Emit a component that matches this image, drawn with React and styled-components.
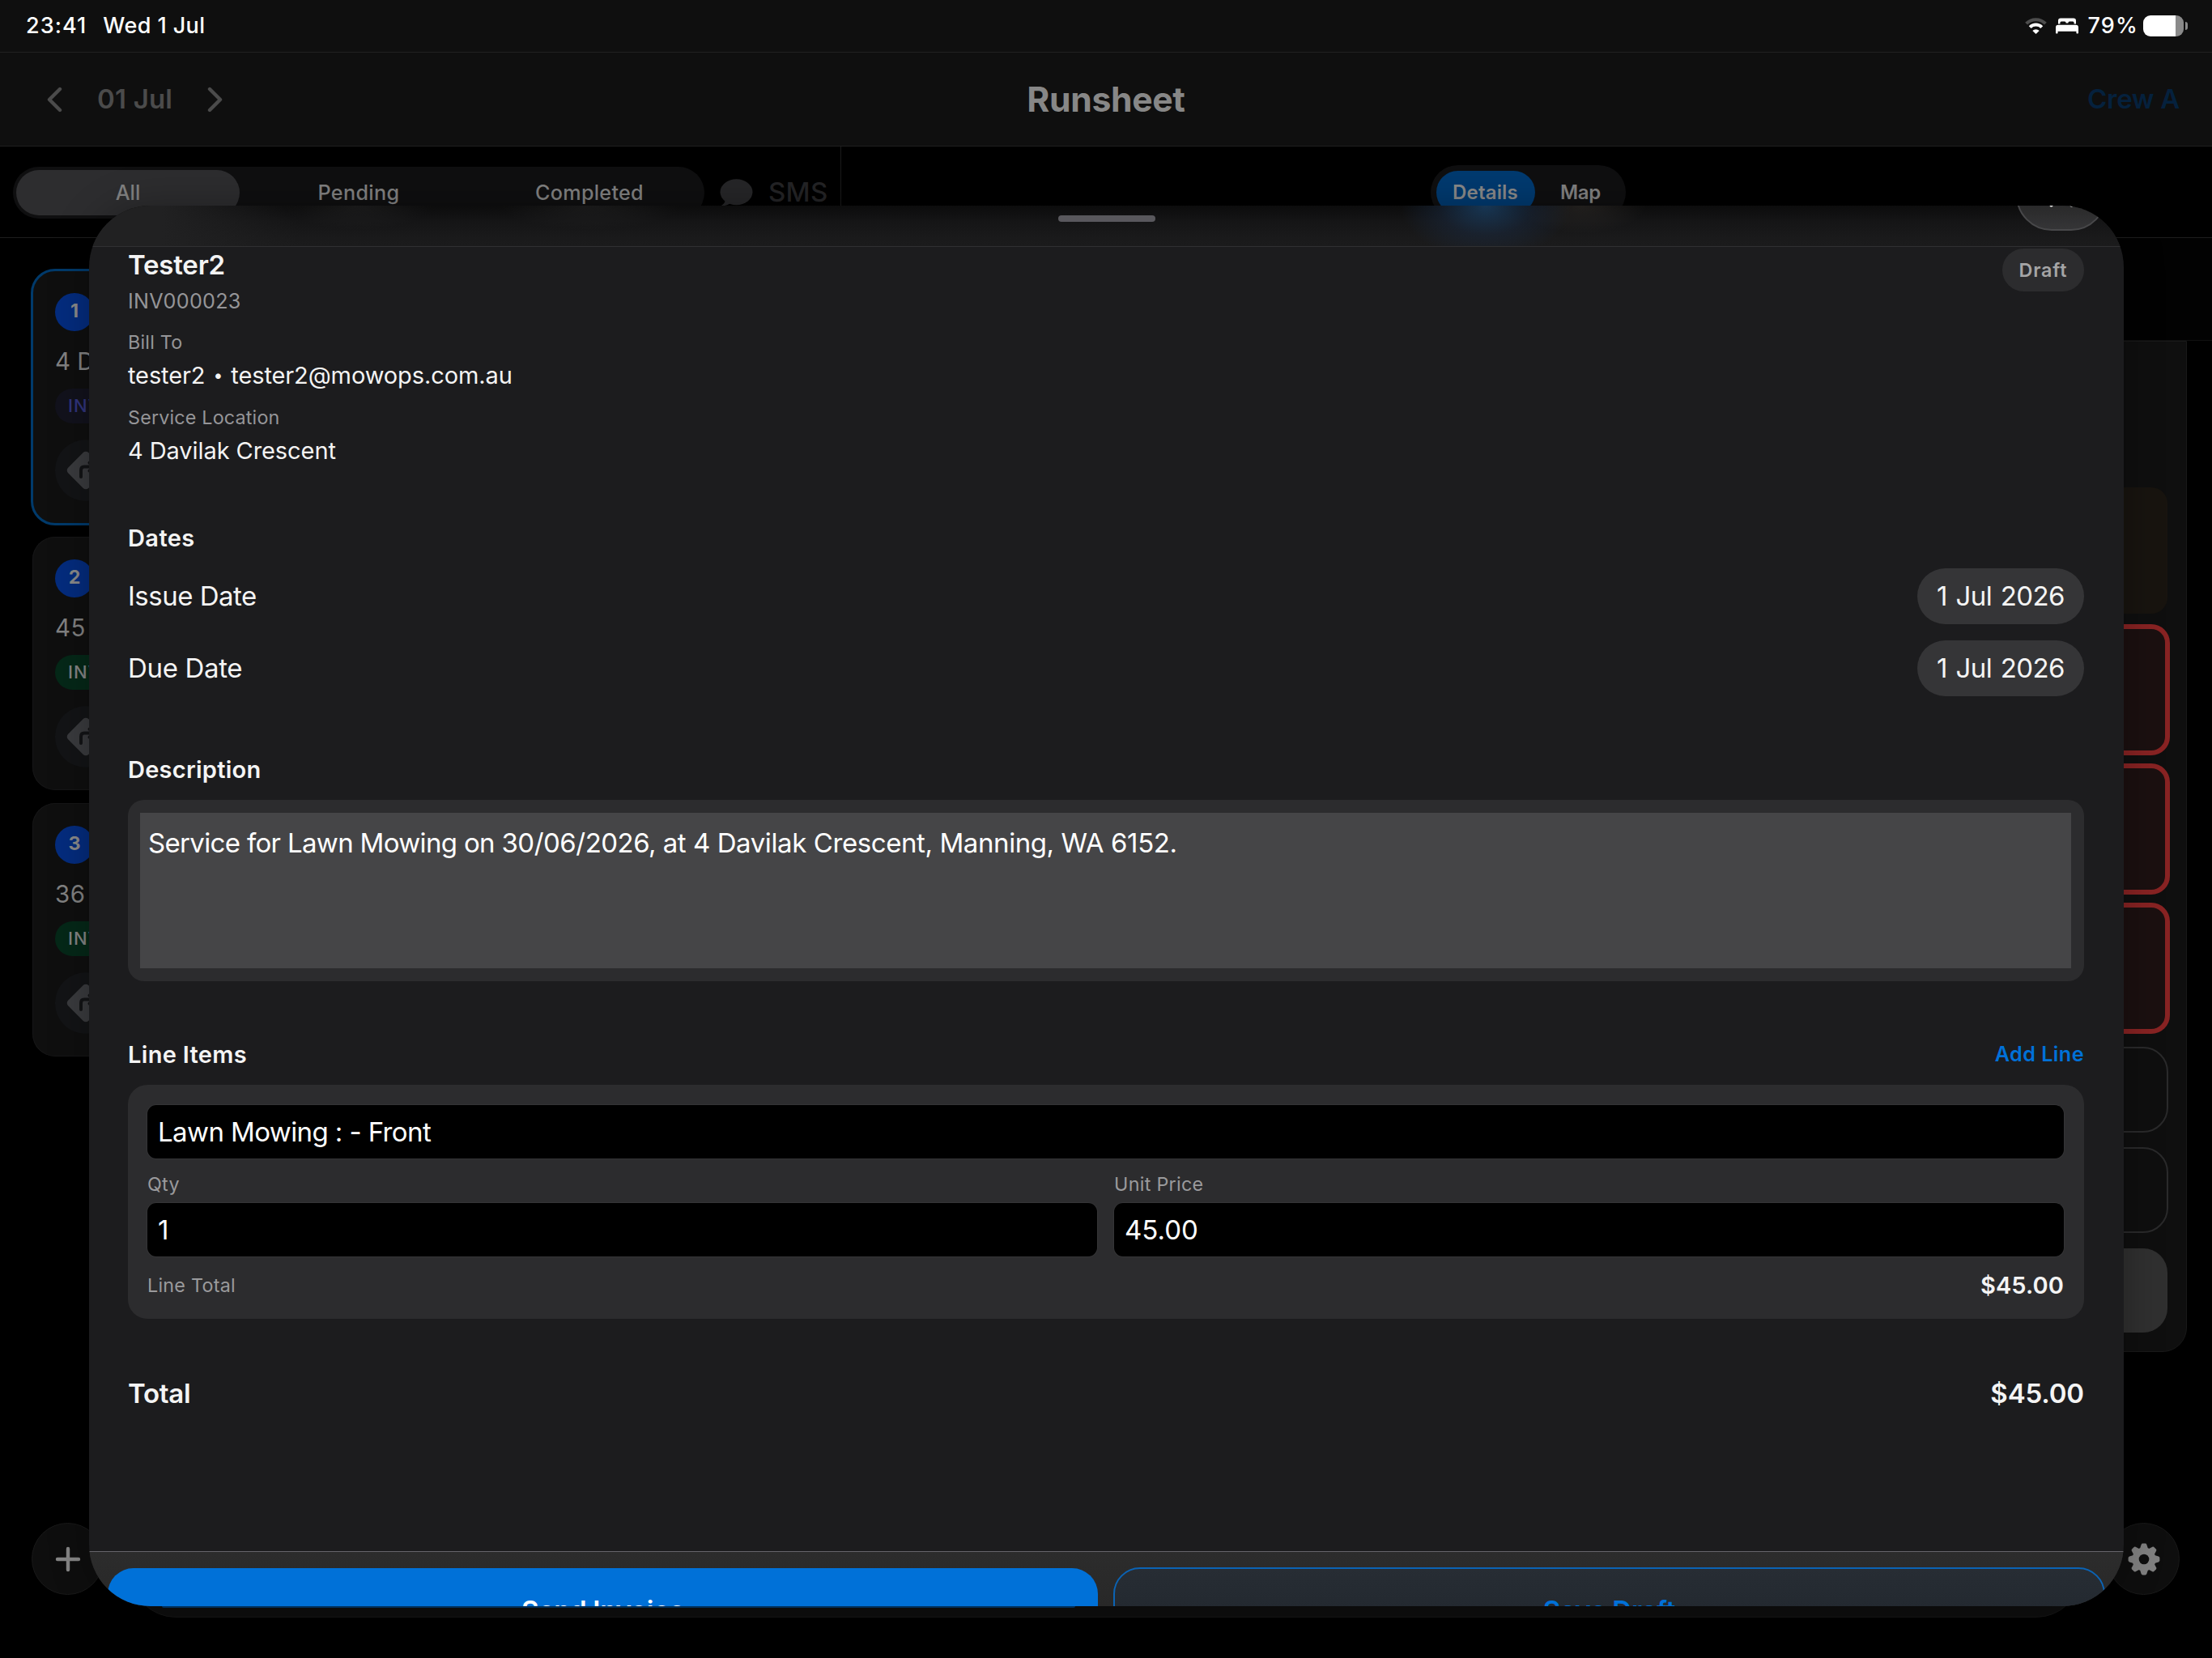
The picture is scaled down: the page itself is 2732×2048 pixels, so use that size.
import React from 'react';
import styled, { createGlobalStyle, css } from 'styled-components';

const GlobalStyle = createGlobalStyle`
  * { box-sizing: border-box; }
  html, body { margin: 0; padding: 0; background: #000; }
  body {
    font-family: Inter, "Liberation Sans", sans-serif;
    -webkit-font-smoothing: antialiased;
    overflow: hidden;
  }
`;

const Text = styled.span`
  display: block;
  white-space: pre;
  font-size: ${p => p.$size}px;
  font-weight: ${p => p.$weight || 400};
  line-height: ${p => p.$line || 36}px;
  letter-spacing: ${p => p.$track || 0}px;
  word-spacing: ${p => p.$word || 0}px;
  color: ${p => p.$color || '#f4f4f4'};
  ${p => p.$dy && css`transform: translateY(${p.$dy}px);`}
`;

const Run = styled.span`
  letter-spacing: ${p => p.$track}px;
`;

const Bullet = styled.span`
  font-size: 21px;
  line-height: 0;
  vertical-align: 3px;
  margin: 0 2px;
`;

const Screen = styled.div`
  position: relative;
  width: 2732px;
  height: 2048px;
  overflow: hidden;
  background: #000;
  display: flex;
  flex-direction: column;
`;

/* ---------- status bar ---------- */

const StatusBar = styled.div`
  height: 64px;
  flex: none;
  background: #0f0f0f;
  display: flex;
  align-items: center;
  justify-content: space-between;
  padding: 0 30px 0 32px;
`;

const StatusGroup = styled.div`
  display: flex;
  align-items: center;
  gap: ${p => p.$gap}px;
`;

const Battery = styled.div`
  display: flex;
  align-items: center;
  gap: 2px;
  margin-left: -5px;
`;

const BatteryBody = styled.div`
  width: 50px;
  height: 26px;
  border-radius: 9px;
  background: linear-gradient(90deg, #fff 40px, #8a8a8a 40px);
`;

const BatteryNub = styled.div`
  width: 3px;
  height: 10px;
  border-radius: 0 3px 3px 0;
  background: #8a8a8a;
`;

/* ---------- app header ---------- */

const Header = styled.header`
  height: 117px;
  flex: none;
  background: #0f0f0f;
  border-top: 1px solid #212121;
  border-bottom: 1px solid #1f1f1f;
  display: grid;
  grid-template-columns: 1fr auto 1fr;
  align-items: center;
  padding: 0 40px;
`;

const DateNav = styled.div`
  display: flex;
  align-items: center;
  gap: 43px;
  margin-left: 18px;
`;

const HeaderEnd = styled.div`
  justify-self: end;
`;

/* ---------- columns ---------- */

const Columns = styled.div`
  flex: 1;
  display: flex;
  min-height: 0;
  margin-bottom: 100px;
`;

const JobColumn = styled.div`
  width: 1039px;
  border-right: 1px solid #1b1b1b;
  display: flex;
  flex-direction: column;
`;

const DetailColumn = styled.div`
  flex: 1;
  display: flex;
  flex-direction: column;
`;

const Toolbar = styled.div`
  height: 113px;
  flex: none;
  border-bottom: 1px solid #1d1d1d;
  display: flex;
  align-items: center;
  justify-content: ${p => (p.$center ? 'center' : 'flex-start')};
  padding: ${p => (p.$center ? '0 0 0 3px' : '2px 16px 0')};
`;

const Segmented = styled.div`
  display: flex;
  align-items: center;
  gap: ${p => p.$gap}px;
  height: ${p => p.$height}px;
  padding: 0 ${p => p.$pad}px;
  border-radius: 34px;
  background: #0f0f10;
`;

const Segment = styled.div`
  width: ${p => p.$width}px;
  height: ${p => p.$height}px;
  border-radius: 28px;
  display: flex;
  align-items: center;
  justify-content: center;
  background: ${p => p.$fill || 'transparent'};
`;

const SmsButton = styled.div`
  display: flex;
  align-items: center;
  gap: 19px;
  margin-left: 19px;
`;

const JobList = styled.div`
  display: flex;
  flex-direction: column;
  gap: 16px;
  padding: 39.6px 32px 0 40px;
`;

const JobCard = styled.div`
  height: 313px;
  border-radius: 28px;
  padding: 28px;
  background: #0f0f0f;
  display: flex;
  flex-direction: column;
  align-items: flex-start;
  ${p =>
    p.$selected
      ? css`outline: 3px solid #003a6b; outline-offset: -1px;`
      : css`box-shadow: inset 0 0 0 1px #161617;`}
`;

const JobNumber = styled.div`
  width: 48px;
  height: 48px;
  border-radius: 50%;
  background: #042c7e;
  display: flex;
  align-items: center;
  justify-content: center;
`;

const JobAddress = styled.div`
  margin-top: 18px;
`;

const InvoiceTag = styled.div`
  margin-top: 17px;
  height: 43px;
  padding: 0 16px;
  border-radius: 22px;
  background: ${p => p.$fill};
  display: flex;
  align-items: center;
`;

const DirectionsButton = styled.div`
  margin-top: 20px;
  width: 76px;
  height: 76px;
  border-radius: 50%;
  background: #131416;
  display: flex;
  align-items: center;
  justify-content: center;
`;

const DetailSpacer = styled.div`
  height: 127px;
  flex: none;
  background: #020202;
  border-bottom: 1px solid #101010;
`;

const DetailPanel = styled.div`
  margin: 0 31px 0 30px;
  height: 1249px;
  border: 1px solid #191919;
  border-radius: 0 0 30px 30px;
  background: #0f0f0f;
  padding: 180px 23px 0;
  display: flex;
  flex-direction: column;
`;

const DetailBlock = styled.div`
  height: 156px;
  border-radius: 20px;
  margin-bottom: ${p => p.$after || 16}px;
  background: ${p => (p.$alert ? '#1b1010' : '#18140f')};
  ${p => p.$alert && css`outline: 6px solid #882323; outline-offset: -3px;`}
`;

const DetailAction = styled.div`
  height: 104px;
  border-radius: 30px;
  margin-bottom: 20px;
  background: ${p => (p.$solid ? '#303030' : 'transparent')};
  ${p => !p.$solid && css`outline: 2px solid #2a2a2b; outline-offset: -1px;`}
`;

/* ---------- floating controls over the columns ---------- */

const FloatingButton = styled.div`
  position: absolute;
  top: 1881px;
  ${p => p.$side}: ${p => p.$inset}px;
  width: 89px;
  height: 89px;
  border-radius: 50%;
  background: #0e0e0e;
  border: 1px solid #191919;
  display: flex;
  align-items: center;
  justify-content: center;
`;

const TabBar = styled.div`
  position: absolute;
  left: 161px;
  right: 161px;
  top: 1881px;
  height: 117px;
  border-radius: 56px;
  background: #0e0e0e;
  border: 1px solid #161616;
  padding: 102px 1242px 0 38px;
`;

const TabTint = styled.div`
  height: 2px;
  border-radius: 0 0 2px 2px;
  background: #00386a;
`;

/* ---------- invoice sheet ---------- */

const Sheet = styled.section`
  position: absolute;
  left: 110px;
  top: 254px;
  width: 2513px;
  height: 1730px;
  border-radius: 76px;
  overflow: hidden;
  background: #1c1c1e;
  box-shadow: 0 0 50px rgba(0, 0, 0, 0.3);
  display: flex;
  flex-direction: column;
`;

const SheetHeader = styled.div`
  height: 51px;
  flex: none;
  border-bottom: 1px solid #303032;
  display: flex;
  justify-content: center;
  padding-top: 12px;
  background:
    radial-gradient(ellipse 105px 66px at 1725px 0, rgba(26, 68, 108, 0.75), rgba(26, 46, 74, 0.4) 55%, transparent),
    radial-gradient(ellipse 80px 34px at 1843px 0, rgba(70, 64, 58, 0.35), transparent),
    radial-gradient(ellipse 90px 30px at 333px 0, rgba(60, 60, 60, 0.25), transparent),
    radial-gradient(ellipse 110px 30px at 619px 0, rgba(60, 60, 60, 0.25), transparent),
    linear-gradient(90deg, #212122 90px, rgba(33, 33, 34, 0) 260px),
    linear-gradient(180deg, #0c0c0c, #151516 40%, #1a1a1b 80%, #1b1b1c);
`;

const Grabber = styled.div`
  width: 120px;
  height: 8px;
  border-radius: 4px;
  background: #59585d;
`;

const CloseButton = styled.div`
  position: absolute;
  top: -57px;
  left: 2380px;
  width: 112px;
  height: 88px;
  border-radius: 44px;
  border: 2px solid #48484a;
  background: linear-gradient(180deg, #262626 55%, #353537);
  display: flex;
  align-items: center;
  justify-content: center;
`;

const SheetBody = styled.div`
  flex: 1;
  min-height: 0;
  padding: 2px 49px 0 48px;
  display: flex;
  flex-direction: column;
  gap: 72px;
`;

const Section = styled.div`
  display: flex;
  flex-direction: column;
  gap: 20px;
`;

const Client = styled.div`
  display: flex;
  justify-content: space-between;
  align-items: flex-start;
  margin-bottom: -1px;
`;

const ClientInfo = styled.div`
  display: flex;
  flex-direction: column;
`;

const Field = styled.div`
  display: flex;
  flex-direction: column;
  gap: ${p => p.$gap || 9}px;
  margin-top: ${p => p.$before || 0}px;
`;

const DraftBadge = styled.div`
  width: 101px;
  height: 53px;
  border-radius: 27px;
  background: #2c2c2e;
  display: flex;
  align-items: center;
  justify-content: center;
`;

const Row = styled.div`
  display: flex;
  align-items: center;
  justify-content: space-between;
  height: ${p => (p.$height ? `${p.$height}px` : 'auto')};
  margin-top: ${p => p.$before || 0}px;
`;

const DatePill = styled.div`
  width: 206px;
  height: 69px;
  border-radius: 35px;
  background: #353537;
  display: flex;
  align-items: center;
  justify-content: center;
`;

const DescriptionBox = styled.div`
  height: 224px;
  padding: 16px 16px 16px 15px;
  border-radius: 20px;
  background: #2c2c2e;
`;

const DescriptionField = styled.div`
  height: 192px;
  padding: 19px 10px;
  background: #454547;
`;

const LineCard = styled.div`
  height: 289px;
  padding: 25px 25px 24px 24px;
  border-radius: 24px;
  background: #2c2c2e;
`;

const Input = styled.div`
  height: 66px;
  padding-left: 13px;
  border-radius: 11px;
  background: #000;
  box-shadow: 0 0 0 1px #343436;
  display: flex;
  align-items: center;
`;

const InputGrid = styled.div`
  display: grid;
  grid-template-columns: 1fr 1fr;
  gap: 21px;
  margin-top: 18px;
`;

const SheetFooter = styled.div`
  height: 68px;
  flex: none;
  border-top: 1px solid #66656a;
  background: linear-gradient(180deg, #2c2c2c, #282828);
  padding: 20px 24px 0 23px;
  display: grid;
  grid-template-columns: 1fr 1fr;
  align-items: start;
  gap: 20px;
`;

const ActionButton = styled.div`
  height: 104px;
  border-radius: 32px;
  display: flex;
  align-items: center;
  justify-content: center;
  ${p =>
    p.$primary
      ? css`background: #0071d8;`
      : css`
          background: linear-gradient(180deg, #272d34, #232930 50%);
          outline: 2px solid #0b63b4;
          outline-offset: -1px;
        `}
`;

/* ---------- icons ---------- */

const Chevron = ({ flip }) => (
  <svg width="19" height="32" viewBox="0 0 19 32" fill="none" stroke="#4b4b4b" strokeWidth="4.4" strokeLinecap="round" strokeLinejoin="round">
    <path d={flip ? 'M3 3 L16 16 L3 29' : 'M16 3 L3 16 L16 29'} />
  </svg>
);

const WifiIcon = () => (
  <svg width="27" height="20" viewBox="0 0 27 20" fill="none" strokeLinecap="butt">
    <path d="M1.6 7.2 A16.6 16.6 0 0 1 25.4 7.2" stroke="#4d4d4d" strokeWidth="4" />
    <path d="M6.2 11.6 A10.3 10.3 0 0 1 20.8 11.6" stroke="#fff" strokeWidth="4" />
    <path d="M13.5 20 L9.3 15.9 A6 6 0 0 1 17.7 15.9 Z" fill="#fff" />
  </svg>
);

const BedIcon = () => (
  <svg width="28" height="20" viewBox="0 0 28 20" fill="#fff">
    <path d="M3 7.4 V3.6 Q3 0.6 6 0.6 H22 Q25 0.6 25 3.6 V7.4 H22.6 V6 Q22.6 4.4 21 4.4 H17 Q15.4 4.4 15.4 6 V6.6 H12.6 V6 Q12.6 4.4 11 4.4 H7 Q5.4 4.4 5.4 6 V7.4 Z" />
    <path d="M0 12 Q0 8.8 3.2 8.8 H24.8 Q28 8.8 28 12 V18.6 Q28 19.6 27 19.6 H26.4 Q25.4 19.6 25.4 18.6 V16.8 H2.6 V18.6 Q2.6 19.6 1.6 19.6 H1 Q0 19.6 0 18.6 Z" />
  </svg>
);

const BubbleIcon = () => (
  <svg width="41" height="34" viewBox="0 0 41 34" fill="#262628">
    <ellipse cx="20.5" cy="16.2" rx="20" ry="16" />
    <path d="M7 26 C6.4 29.4 4.6 31.4 2.4 32.4 C2 32.8 2.2 33.4 3 33.4 C7.4 33.4 11 31.8 13 30 Z" />
  </svg>
);

const DirectionsIcon = () => (
  <svg width="50" height="50" viewBox="0 0 50 50">
    <rect x="7.2" y="7.2" width="35.6" height="35.6" rx="4.6" transform="rotate(45 25 25)" fill="#3a3b3e" />
    <path d="M19 33 V25 Q19 20.6 23 20.6 H34 M29.5 15.6 L34.5 20.6 L29.5 25.6" fill="none" stroke="#131416" strokeWidth="4" strokeLinecap="round" strokeLinejoin="round" />
  </svg>
);

const PlusIcon = () => (
  <svg width="32" height="32" viewBox="0 0 32 32" stroke="#858585" strokeWidth="4.4" strokeLinecap="round">
    <path d="M16 3 V29 M3 16 H29" />
  </svg>
);

const GearIcon = () => (
  <svg width="40" height="40" viewBox="-20 -20 40 40">
    <mask id="gear-hole">
      <rect x="-20" y="-20" width="40" height="40" fill="#fff" />
      <circle r="6.3" fill="#000" />
    </mask>
    <g mask="url(#gear-hole)" fill="#808080">
      <circle r="14.6" />
      {[0, 45, 90, 135].map(a => (
        <path key={a} transform={`rotate(${a})`} d="M-5 -13 L-3.4 -18 Q-2.9 -19.4 -1.6 -19.4 H1.6 Q2.9 -19.4 3.4 -18 L5 -13 V13 L3.4 18 Q2.9 19.4 1.6 19.4 H-1.6 Q-2.9 19.4 -3.4 18 L-5 13 Z" />
      ))}
    </g>
  </svg>
);

const CloseIcon = () => (
  <svg width="30" height="30" viewBox="0 0 30 30" stroke="#f4f4f4" strokeWidth="4" strokeLinecap="round">
    <path d="M2.5 2.5 L27.5 27.5 M27.5 2.5 L2.5 27.5" />
  </svg>
);

/* ---------- page ---------- */

const jobs = [
  { n: '1', address: '4 D', selected: true, fill: '#12121c', ink: '#30347c' },
  { n: '2', address: '45', fill: '#052818', ink: '#848484' },
  { n: '3', address: '36', fill: '#052818', ink: '#848484' },
];

const Label = ({ children, track, line = 28, color = '#959598' }) => (
  <Text $size={23.3} $line={line} $track={track} $color={color}>{children}</Text>
);

export default function App() {
  return (
    <Screen>
      <GlobalStyle />
      <StatusBar>
        <StatusGroup $gap={20}>
          <Text $size={27} $weight={500} $track={1.05} $color="#fff">23:41</Text>
          <Text $size={27} $weight={500} $track={0.42} $color="#fff">Wed 1 Jul</Text>
        </StatusGroup>
        <StatusGroup $gap={11}>
          <WifiIcon />
          <BedIcon />
          <Text $size={27} $weight={500} $track={1.2} $color="#fff">79%</Text>
          <Battery>
            <BatteryBody />
            <BatteryNub />
          </Battery>
        </StatusGroup>
      </StatusBar>

      <Header>
        <DateNav>
          <Chevron />
          <Text $size={33} $weight={600} $track={0.2} $color="#4b4b4b" $dy={-1}>01 Jul</Text>
          <Chevron flip />
        </DateNav>
        <Text $size={42.7} $weight={700} $line={52} $track={-0.36} $color="#878787">Runsheet</Text>
        <HeaderEnd>
          <Text $size={33} $weight={600} $track={-0.3} $color="#05213d" $dy={-1}>Crew A</Text>
        </HeaderEnd>
      </Header>

      <Columns>
        <JobColumn>
          <Toolbar>
            <Segmented $gap={9} $height={64} $pad={4}>
              <Segment $width={276} $height={56} $fill="#2d2d2f">
                <Text $size={25.2} $weight={500} $color="#828282">All</Text>
              </Segment>
              <Segment $width={276} $height={56}>
                <Text $size={25.2} $weight={500} $track={0.33} $color="#828282">Pending</Text>
              </Segment>
              <Segment $width={276} $height={56}>
                <Text $size={25.2} $weight={500} $track={0.26} $color="#828282">Completed</Text>
              </Segment>
            </Segmented>
            <SmsButton>
              <BubbleIcon />
              <Text $size={33} $weight={500} $track={0.28} $color="#242426" $dy={-1}>SMS</Text>
            </SmsButton>
          </Toolbar>
          <JobList>
            {jobs.map(job => (
              <JobCard key={job.n} $selected={job.selected}>
                <JobNumber>
                  <Text $size={23.3} $weight={700} $color="#8a8a8a" $dy={-1}>{job.n}</Text>
                </JobNumber>
                <JobAddress>
                  <Text $size={29.4} $track={job.selected ? 0 : 0.6} $color="#828282" $dy={1.5}>{job.address}</Text>
                </JobAddress>
                <InvoiceTag $fill={job.fill}>
                  <Text $size={22} $weight={500} $track={1} $color={job.ink} $dy={-1}>INV</Text>
                </InvoiceTag>
                <DirectionsButton><DirectionsIcon /></DirectionsButton>
              </JobCard>
            ))}
          </JobList>
        </JobColumn>

        <DetailColumn>
          <Toolbar $center>
            <Segmented $gap={8} $height={67} $pad={7}>
              <Segment $width={122} $height={53} $fill="#003a70">
                <Text $size={24} $weight={600} $track={0.17} $color="#8a8a8a" $dy={1}>Details</Text>
              </Segment>
              <Segment $width={97} $height={53}>
                <Text $size={24} $weight={600} $track={-0.3} $color="#828282" $dy={1}>Map</Text>
              </Segment>
            </Segmented>
          </Toolbar>
          <DetailSpacer />
          <DetailPanel>
            <DetailBlock />
            <DetailBlock $alert />
            <DetailBlock $alert />
            <DetailBlock $alert $after={20} />
            <DetailAction />
            <DetailAction />
            <DetailAction $solid />
          </DetailPanel>
        </DetailColumn>
      </Columns>

      <FloatingButton $side="left" $inset={39}><PlusIcon /></FloatingButton>
      <FloatingButton $side="right" $inset={40}><GearIcon /></FloatingButton>
      <TabBar><TabTint /></TabBar>

      <Sheet>
        <SheetHeader><Grabber /></SheetHeader>
        <CloseButton><CloseIcon /></CloseButton>
        <SheetBody>
          <Client>
            <ClientInfo>
              <Field $gap={10}>
                <Text $size={33} $weight={600} $line={40} $track={-0.21}>Tester2</Text>
                <Text $size={25.2} $line={30} $track={0.25} $color="#959598">INV000023</Text>
              </Field>
              <Field $before={22}>
                <Label track={0.2}>Bill To</Label>
                <Text $size={29} $track={-0.1}>tester2 <Bullet>•</Bullet> tester2@mowops.com.au</Text>
              </Field>
              <Field $before={20}>
                <Label track={0.18}>Service Location</Label>
                <Text $size={29} $track={-0.08}>4 Davilak Crescent</Text>
              </Field>
            </ClientInfo>
            <DraftBadge>
              <Text $size={23.3} $weight={600} $track={0.85} $color="#a5a5a6">Draft</Text>
            </DraftBadge>
          </Client>

          <Section>
            <Text $size={29} $weight={600} $track={0.4} $dy={1}>Dates</Text>
            <Row>
              <Text $size={33} $track={-0.5} $dy={-1}>Issue Date</Text>
              <DatePill><Text $size={33} $track={-0.6} $word={2} $dy={-1}>1 Jul 2026</Text></DatePill>
            </Row>
            <Row>
              <Text $size={33} $track={-0.34} $dy={-1}>Due Date</Text>
              <DatePill><Text $size={33} $track={-0.6} $word={2} $dy={-1}>1 Jul 2026</Text></DatePill>
            </Row>
          </Section>

          <Section>
            <Text $size={29} $weight={600} $track={0.25} $dy={1}>Description</Text>
            <DescriptionBox>
              <DescriptionField>
                <Text $size={33} $color="#fff">
                  <Run $track={-0.67}>Service for Lawn Mowing on </Run>
                  <Run $track={-0.51}>30/06/2026, at </Run>
                  <Run $track={-0.41}>4 Davilak Crescent, Manning, WA 6152.</Run>
                </Text>
              </DescriptionField>
            </DescriptionBox>
          </Section>

          <Section>
            <Row>
              <Text $size={29} $weight={600} $track={0.32} $dy={1}>Line Items</Text>
              <Text $size={25.2} $weight={600} $track={0.43} $color="#0071d8">Add Line</Text>
            </Row>
            <LineCard>
              <Input><Text $size={33} $track={-0.6} $color="#fff">Lawn Mowing : - Front</Text></Input>
              <InputGrid>
                <Field>
                  <Label track={0.3} color="#9a9a9c">Qty</Label>
                  <Input><Text $size={33} $color="#fff">1</Text></Input>
                </Field>
                <Field>
                  <Label track={0.3} color="#9a9a9c">Unit Price</Label>
                  <Input><Text $size={33} $track={0} $color="#fff">45.00</Text></Input>
                </Field>
              </InputGrid>
              <Row $before={18} $height={35}>
                <Label track={0.25} color="#9a9a9c">Line Total</Label>
                <Text $size={29} $weight={600} $track={0.1}>$45.00</Text>
              </Row>
            </LineCard>
          </Section>

          <Row>
            <Text $size={33} $weight={600} $line={40} $track={-0.26}>Total</Text>
            <Text $size={33} $weight={600} $line={40} $track={-0.15}>$45.00</Text>
          </Row>
        </SheetBody>
        <SheetFooter>
          <ActionButton $primary>
            <Text $size={33} $weight={600} $track={-0.32} $color="#fff">Send Invoice</Text>
          </ActionButton>
          <ActionButton>
            <Text $size={33} $weight={600} $track={-0.2} $color="#0071d8">Save Draft</Text>
          </ActionButton>
        </SheetFooter>
      </Sheet>
    </Screen>
  );
}
